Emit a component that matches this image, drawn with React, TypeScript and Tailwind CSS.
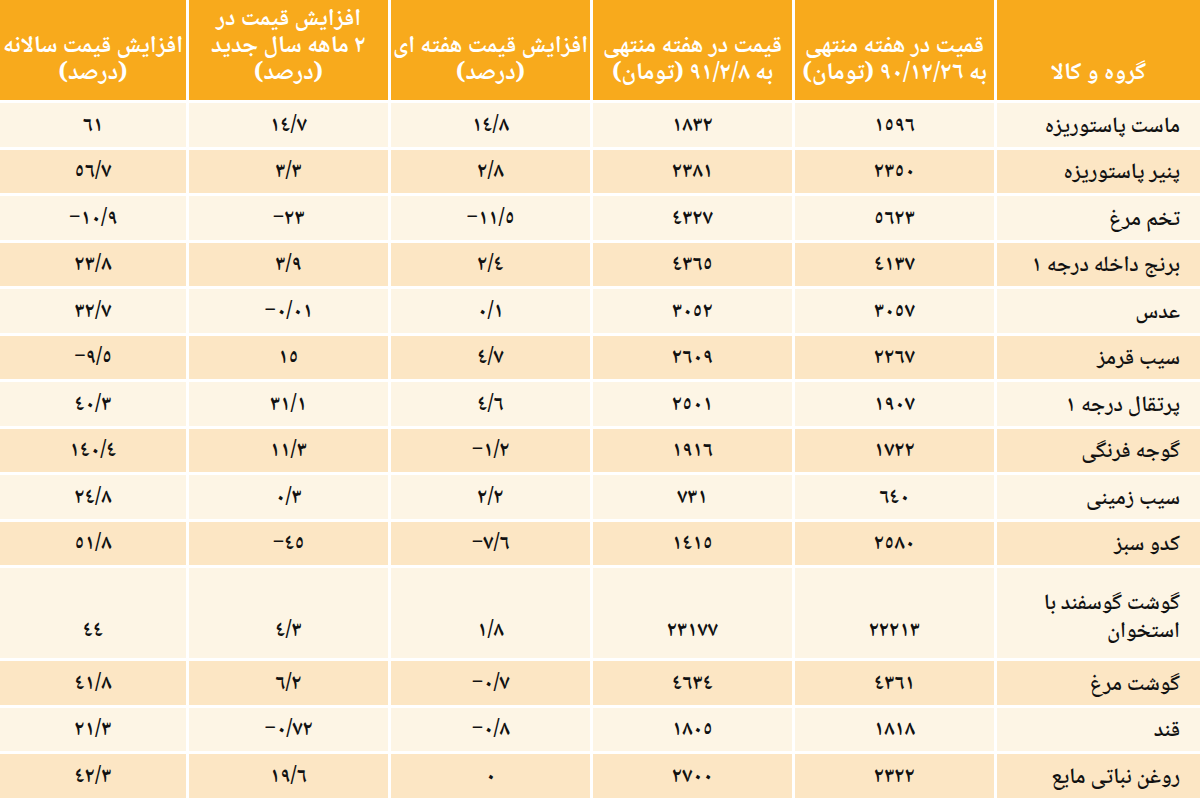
import React from "react";

type Row = { name: string[]; v: string[] };

const rows: Row[] = [
  { name: ["ماست پاستوریزه"], v: ["١٥٩٦", "١٨٣٢", "١٤/٨", "١٤/٧", "٦١"] },
  { name: ["پنیر پاستوریزه"], v: ["٢٣٥٠", "٢٣٨١", "٢/٨", "٣/٣", "٥٦/٧"] },
  { name: ["تخم مرغ"], v: ["٥٦٢٣", "٤٣٢٧", "−١١/٥", "−٢٣", "−١٠/٩"] },
  { name: ["برنج داخله درجه ١"], v: ["٤١٣٧", "٤٣٦٥", "٢/٤", "٣/٩", "٢٣/٨"] },
  { name: ["عدس"], v: ["٣٠٥٧", "٣٠٥٢", "٠/١", "−٠/٠١", "٣٢/٧"] },
  { name: ["سیب قرمز"], v: ["٢٢٦٧", "٢٦٠٩", "٤/٧", "١٥", "−٩/٥"] },
  { name: ["پرتقال درجه ١"], v: ["١٩٠٧", "٢٥٠١", "٤/٦", "٣١/١", "٤٠/٣"] },
  { name: ["گوجه فرنگی"], v: ["١٧٢٢", "١٩١٦", "−١/٢", "١١/٣", "١٤٠/٤"] },
  { name: ["سیب زمینی"], v: ["٦٤٠", "٧٣١", "٢/٢", "٠/٣", "٢٤/٨"] },
  { name: ["کدو سبز"], v: ["٢٥٨٠", "١٤١٥", "−٧/٦", "−٤٥", "٥١/٨"] },
  { name: ["گوشت گوسفند با", "استخوان"], v: ["٢٢٢١٣", "٢٣١٧٧", "١/٨", "٤/٣", "٤٤"] },
  { name: ["گوشت مرغ"], v: ["٤٣٦١", "٤٦٣٤", "−٠/٧", "٦/٢", "٤١/٨"] },
  { name: ["قند"], v: ["١٨١٨", "١٨٠٥", "−٠/٨", "−٠/٧٢", "٢١/٣"] },
  { name: ["روغن نباتی مایع"], v: ["٢٣٢٢", "٢٧٠٠", "٠", "١٩/٦", "٤٢/٣"] },
];

const headers: string[][] = [
  ["گروه و کالا"],
  ["قمیت در هفته منتهی", "به ٩٠/١٢/٢٦ (تومان)"],
  ["قیمت در هفته منتهی", "به ٩١/٢/٨ (تومان)"],
  ["افزایش قیمت هفته ای", "(درصد)"],
  ["افزایش قیمت در", "٢ ماهه سال جدید", "(درصد)"],
  ["افزایش قیمت سالانه", "(درصد)"],
];

const font = { fontFamily: '"Noto Naskh Arabic", "Noto Sans Arabic", "DejaVu Sans", sans-serif' };

export default function App() {
  return (
    <div className="w-[1200px] h-[800px] overflow-hidden bg-white" style={font}>
      <div
        dir="rtl"
        className="grid grid-cols-[203px_199px_199px_199px_199px_186px] grid-rows-[100px_repeat(15,43.5px)] gap-[3px]"
      >
        {headers.map((h, i) => (
          <div
            key={i}
            className="bg-[#f8aa1c] text-white font-bold text-[24px] leading-[27px] flex flex-col items-center justify-end pb-[13px] whitespace-nowrap overflow-x-clip"
          >
            {h.map((l, j) => (
              <div key={j} dir="rtl">{l}</div>
            ))}
          </div>
        ))}
        {rows.map((r, i) => {
          const bg = i % 2 === 0 ? "bg-[#fdf5e5]" : "bg-[#fce6c4]";
          const dbl = r.name.length > 1;
          return (
            <React.Fragment key={i}>
              <div
                className={`${bg} flex flex-col justify-center items-start pr-[20px] text-[22px] leading-[28px] text-[#111] font-semibold whitespace-nowrap ${dbl ? "row-span-2 pt-[10px]" : "pt-[4px]"}`}
              >
                {r.name.map((l, j) => (
                  <div key={j}>{l}</div>
                ))}
              </div>
              {r.v.map((v, j) => (
                <div
                  key={j}
                  className={`${bg} flex ${dbl ? "row-span-2 items-end pb-[12px]" : "items-center pt-[4px]"} justify-center text-[21px] leading-[28px] font-bold text-[#111]`}
                >
                  <span className="[direction:ltr] [unicode-bidi:bidi-override] tracking-[3px]">{v}</span>
                </div>
              ))}
            </React.Fragment>
          );
        })}
      </div>
    </div>
  );
}
